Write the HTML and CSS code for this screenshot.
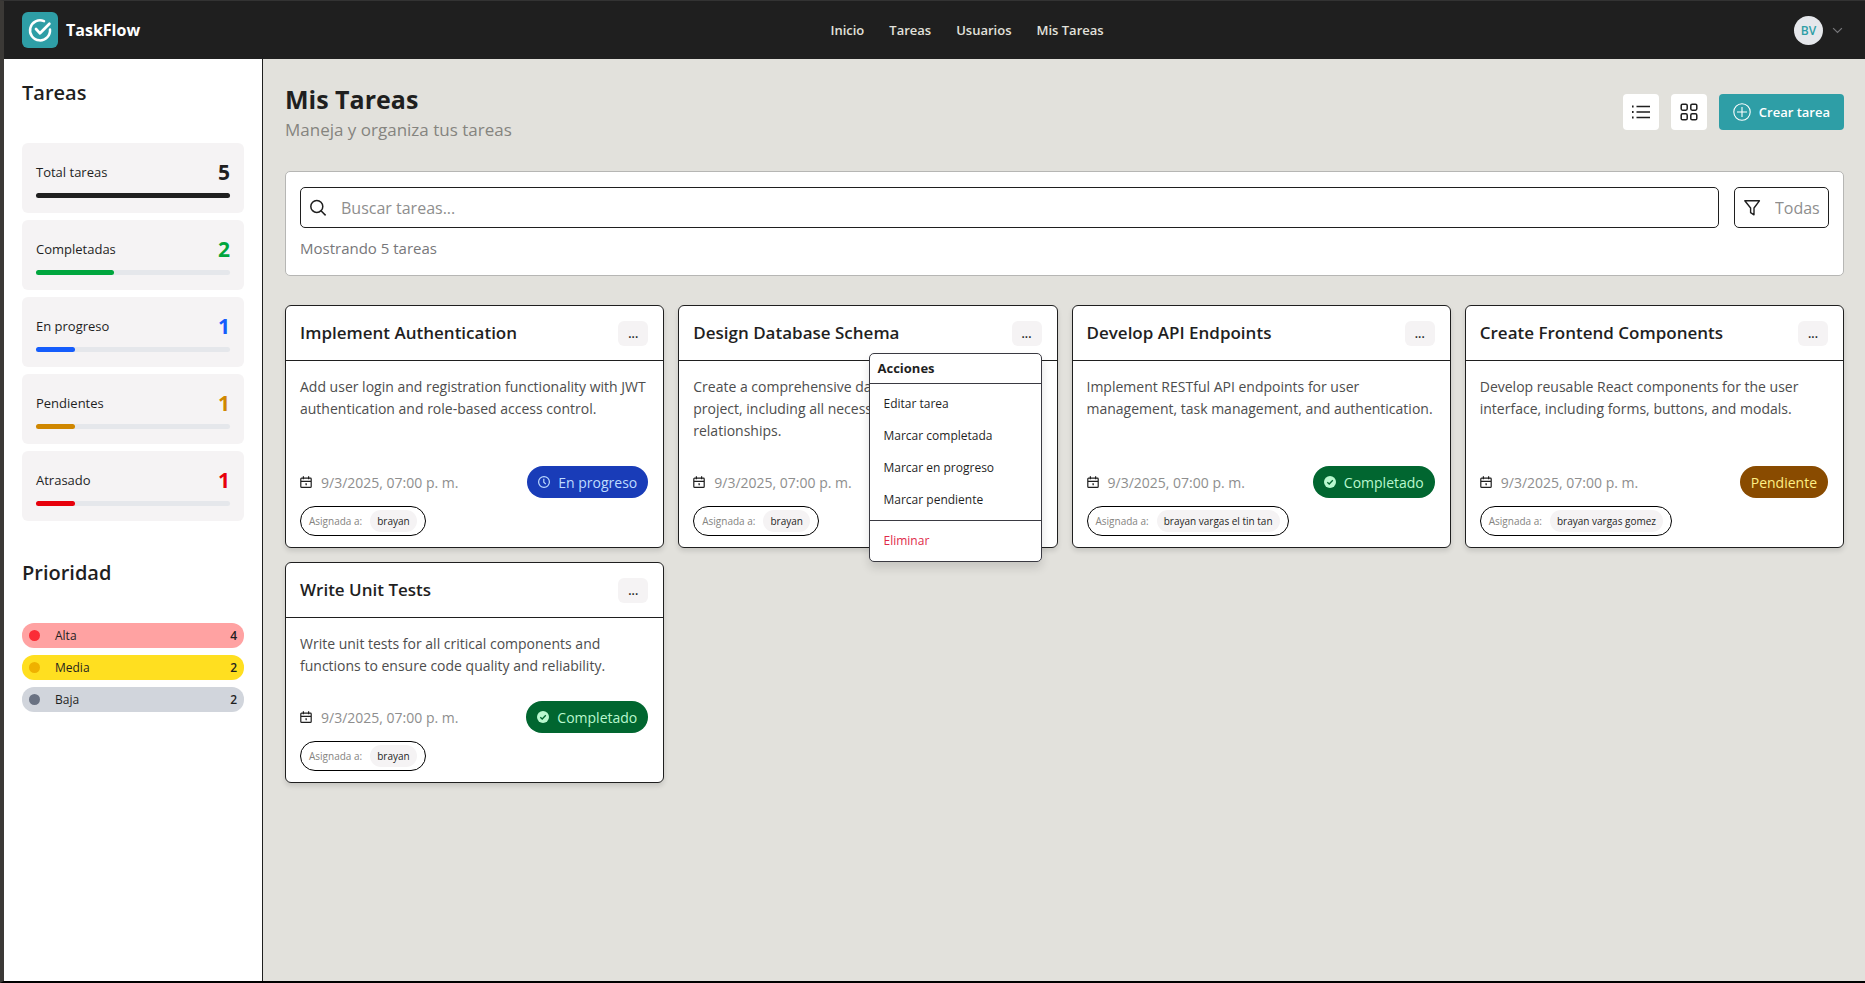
FILE: index.html
```html
<!DOCTYPE html>
<html lang="es">
<head>
<meta charset="utf-8">
<meta name="viewport" content="width=device-width, initial-scale=1">
<title>TaskFlow - Mis Tareas</title>
<link rel="stylesheet" href="styles.css">
</head>
<body>
<svg class="sprite" aria-hidden="true">
  <symbol id="calendar" viewBox="0 0 12 12"><path d="M1.6 2.2h8.8a.8.8 0 0 1 .8.8v7.4a.9.9 0 0 1-.9.9H1.7a.9.9 0 0 1-.9-.9V3a.8.8 0 0 1 .8-.8zM1 5.4h10M3.4.3v3M8.6.3v3M5.4 7.8h.8v1.4" fill="none" stroke="currentColor" stroke-width="1.2"/></symbol>
  <symbol id="clock" viewBox="0 0 12 12"><circle cx="6" cy="6" r="5.4" fill="none" stroke="currentColor" stroke-width="1.2"/><path d="M5.8 2.8v3.4l2 2" fill="none" stroke="currentColor" stroke-width="1.2"/></symbol>
  <symbol id="check" viewBox="0 0 12 12"><circle cx="6" cy="6" r="6" fill="currentColor"/><path d="M3.3 6.2l1.9 1.8 3.6-3.8" fill="none" stroke="#016630" stroke-width="1.3"/></symbol>
</svg>
<header class="topbar">
  <a class="brand" href="#">
    <svg class="brand-logo" viewBox="0 0 36 36" aria-hidden="true"><rect width="36" height="36" rx="6" fill="#2e9ea6"/><path d="M22 9.2A10 10 0 1 0 28 17.5" fill="none" stroke="#fff" stroke-width="2.5" stroke-linecap="round"/><path d="M14 17l4 4.3 9.4-9.6" fill="none" stroke="#fff" stroke-width="2.7" stroke-linecap="round" stroke-linejoin="round"/></svg>
    <span>TaskFlow</span>
  </a>
  <nav class="nav">
    <a href="#">Inicio</a><a href="#">Tareas</a><a href="#">Usuarios</a><a href="#">Mis Tareas</a>
  </nav>
  <button class="user" type="button" aria-label="Cuenta">
    <span class="avatar">BV</span>
    <svg class="chevron" viewBox="0 0 10 6" aria-hidden="true"><path d="M1 .8l4 4 4-4" fill="none" stroke="#77777a" stroke-width="1.1"/></svg>
  </button>
</header>
<div class="shell">
  <aside class="sidebar">
    <h2>Tareas</h2>
    <div class="stats">
      <div class="stat total"><div class="stat-row"><span>Total tareas</span><strong>5</strong></div><div class="bar"><div class="fill" style="width:100%"></div></div></div>
      <div class="stat done"><div class="stat-row"><span>Completadas</span><strong>2</strong></div><div class="bar"><div class="fill" style="width:40%"></div></div></div>
      <div class="stat progress"><div class="stat-row"><span>En progreso</span><strong>1</strong></div><div class="bar"><div class="fill" style="width:20%"></div></div></div>
      <div class="stat pending"><div class="stat-row"><span>Pendientes</span><strong>1</strong></div><div class="bar"><div class="fill" style="width:20%"></div></div></div>
      <div class="stat late"><div class="stat-row"><span>Atrasado</span><strong>1</strong></div><div class="bar"><div class="fill" style="width:20%"></div></div></div>
    </div>
    <h2>Prioridad</h2>
    <ul class="priorities">
      <li class="high"><i class="dot"></i><span>Alta</span><b>4</b></li>
      <li class="medium"><i class="dot"></i><span>Media</span><b>2</b></li>
      <li class="low"><i class="dot"></i><span>Baja</span><b>2</b></li>
    </ul>
  </aside>
  <main class="main">
    <div class="page-head">
      <div>
        <h1>Mis Tareas</h1>
        <p>Maneja y organiza tus tareas</p>
      </div>
      <div class="tools">
        <button class="icon-btn" type="button" aria-label="Vista de lista"><svg width="20" height="16" viewBox="0 0 20 16" aria-hidden="true"><path d="M5.5 2.5H19M5.5 8H19M5.5 13.5H19" stroke="#1f1f1f" stroke-width="1.4"/><path d="M1 2.5h1.6M1 8h1.6M1 13.5h1.6" stroke="#1f1f1f" stroke-width="1.8"/></svg></button>
        <button class="icon-btn" type="button" aria-label="Vista de cuadrícula"><svg width="18" height="18" viewBox="0 0 18 18" fill="none" stroke="#1f1f1f" stroke-width="1.5" aria-hidden="true"><rect x="1.2" y="1.2" width="6" height="6" rx="1.4"/><rect x="10.8" y="1.2" width="6" height="6" rx="1.4"/><rect x="1.2" y="10.8" width="6" height="6" rx="1.4"/><rect x="10.8" y="10.8" width="6" height="6" rx="1.4"/></svg></button>
        <button class="create" type="button"><svg width="18" height="18" viewBox="0 0 18 18" fill="none" stroke="#fff" stroke-width="1.1" aria-hidden="true"><circle cx="9" cy="9" r="8.2"/><path d="M9 4v10M4 9h10"/></svg><span>Crear tarea</span></button>
      </div>
    </div>
    <section class="filters">
      <div class="filter-row">
        <label class="field search"><svg width="18" height="18" viewBox="0 0 18 18" fill="none" stroke="#1f1f1f" stroke-width="1.5" aria-hidden="true"><circle cx="7.8" cy="7.4" r="6"/><path d="M12 11.8l4.6 4.6"/></svg><input type="search" placeholder="Buscar tareas..." aria-label="Buscar tareas"></label>
        <label class="field"><svg width="18" height="18" viewBox="0 0 18 18" fill="none" stroke="#1f1f1f" stroke-width="1.4" stroke-linejoin="round" aria-hidden="true"><path d="M1.8 1.8h14.6L11 9v6.8l-3.4-2.1V9z"/></svg><select aria-label="Filtrar tareas"><option>Todas</option></select></label>
      </div>
      <p>Mostrando 5 tareas</p>
    </section>
    <section class="grid">
      <article class="card">
        <header><h3>Implement Authentication</h3><div class="actions"><button class="more" type="button" aria-label="Acciones">...</button></div></header>
        <div class="body">
          <p class="desc">Add user login and registration functionality with JWT authentication and role-based access control.</p>
          <div class="meta"><span class="date"><svg><use href="#calendar"/></svg><time>9/3/2025, 07:00 p. m.</time></span><span class="badge b-progress"><svg><use href="#clock"/></svg>En progreso</span></div>
          <div class="assigned"><span>Asignada a:</span><span class="person">brayan</span></div>
        </div>
      </article>
      <article class="card">
        <header><h3>Design Database Schema</h3><div class="actions"><button class="more" type="button" aria-label="Acciones" aria-expanded="true">...</button>
          <div class="menu">
            <div class="menu-title">Acciones</div>
            <div class="menu-group"><button type="button">Editar tarea</button><button type="button">Marcar completada</button><button type="button">Marcar en progreso</button><button type="button">Marcar pendiente</button></div>
            <div class="menu-group"><button class="danger" type="button">Eliminar</button></div>
          </div></div></header>
        <div class="body">
          <p class="desc">Create a comprehensive database schema for the project, including all necessary tables and relationships.</p>
          <div class="meta"><span class="date"><svg><use href="#calendar"/></svg><time>9/3/2025, 07:00 p. m.</time></span></div>
          <div class="assigned"><span>Asignada a:</span><span class="person">brayan</span></div>
        </div>
      </article>
      <article class="card">
        <header><h3>Develop API Endpoints</h3><div class="actions"><button class="more" type="button" aria-label="Acciones">...</button></div></header>
        <div class="body">
          <p class="desc">Implement RESTful API endpoints for user management, task management, and authentication.</p>
          <div class="meta"><span class="date"><svg><use href="#calendar"/></svg><time>9/3/2025, 07:00 p. m.</time></span><span class="badge b-done"><svg><use href="#check"/></svg>Completado</span></div>
          <div class="assigned"><span>Asignada a:</span><span class="person">brayan vargas el tin tan</span></div>
        </div>
      </article>
      <article class="card">
        <header><h3>Create Frontend Components</h3><div class="actions"><button class="more" type="button" aria-label="Acciones">...</button></div></header>
        <div class="body">
          <p class="desc">Develop reusable React components for the user interface, including forms, buttons, and modals.</p>
          <div class="meta"><span class="date"><svg><use href="#calendar"/></svg><time>9/3/2025, 07:00 p. m.</time></span><span class="badge b-pending">Pendiente</span></div>
          <div class="assigned"><span>Asignada a:</span><span class="person">brayan vargas gomez</span></div>
        </div>
      </article>
      <article class="card">
        <header><h3>Write Unit Tests</h3><div class="actions"><button class="more" type="button" aria-label="Acciones">...</button></div></header>
        <div class="body">
          <p class="desc">Write unit tests for all critical components and functions to ensure code quality and reliability.</p>
          <div class="meta"><span class="date"><svg><use href="#calendar"/></svg><time>9/3/2025, 07:00 p. m.</time></span><span class="badge b-done"><svg><use href="#check"/></svg>Completado</span></div>
          <div class="assigned"><span>Asignada a:</span><span class="person">brayan</span></div>
        </div>
      </article>
    </section>
  </main>
</div>
</body>
</html>
```
FILE: styles.css
```css
* { box-sizing: border-box; }
body {
  margin: 0;
  min-height: 100vh;
  display: flex;
  flex-direction: column;
  border-left: 4px solid #3b3936;
  border-top: 1px solid #333;
  border-bottom: 2px solid #000;
  background: #e2e1dc;
  color: #1f1f1f;
  font-family: "Open Sans", "Noto Sans", sans-serif;
  font-size: 14px;
}
h1, h2, h3, p, ul { margin: 0; padding: 0; }
a { color: inherit; text-decoration: none; }
button, input, select { font: inherit; color: inherit; border: 0; padding: 0; background: none; }
.sprite { display: none; }

.topbar {
  height: 58px;
  display: flex;
  align-items: center;
  justify-content: space-between;
  padding: 0 22px 0 18px;
  background: #1f1f1f;
}
.brand { display: flex; align-items: center; gap: 8px; color: #fff; font-size: 16px; font-weight: 700; }
.brand-logo { width: 36px; height: 36px; }
.nav { display: flex; gap: 25px; color: #e2e1dc; font-size: 13px; font-weight: 600; }
.user { display: flex; align-items: center; gap: 9px; }
.avatar {
  width: 29px; height: 29px; border-radius: 50%;
  display: grid; place-items: center;
  background: #e5e7eb; color: #2e9ea6; font-size: 12px; font-weight: 600;
}
.chevron { width: 11px; height: 7px; }

.shell { flex: 1; display: flex; }
.sidebar {
  width: 259px;
  flex: none;
  padding: 18px;
  background: #fff;
  border-right: 1px solid #1f1f1f;
}
h2 { font-size: 20px; line-height: 32px; font-weight: 600; }
.stats { display: grid; gap: 7px; margin: 34px 0; }
.stat { padding: 15px 14px; border-radius: 6px; background: #f5f3f4; }
.stat-row { display: flex; justify-content: space-between; align-items: center; height: 27px; margin-bottom: 8px; font-size: 13px; }
.stat-row strong { font-size: 21px; font-weight: 700; }
.bar { height: 5px; border-radius: 3px; background: #e5e7eb; }
.fill { height: 100%; border-radius: 3px; background: currentColor; }
.done strong, .done .bar { color: #00a63e; }
.progress strong, .progress .bar { color: #155dfc; }
.pending strong, .pending .bar { color: #d08700; }
.late strong, .late .bar { color: #e7000b; }
.total .bar { color: #1f1f1f; }
.stats + h2 { padding-top: 2px; }
.priorities { list-style: none; display: grid; gap: 7px; margin-top: 34px; }
.priorities li { height: 25px; display: flex; align-items: center; padding: 0 7px; border-radius: 12px; font-size: 12px; }
.priorities span { flex: 1; margin-left: 15px; }
.priorities b { font-weight: 600; }
.dot { width: 11px; height: 11px; border-radius: 50%; }
.high { background: #ffa2a2; } .high .dot { background: #fb2c36; }
.medium { background: #ffdf20; } .medium .dot { background: #efb100; }
.low { background: #d1d5dc; } .low .dot { background: #6a7282; }

.main { flex: 1; min-width: 0; padding: 22px 21px 22px 22px; }
.page-head { display: flex; justify-content: space-between; align-items: center; margin-bottom: 28px; }
h1 { font-size: 25px; line-height: 36px; font-weight: 700; }
.page-head p { font-size: 17px; line-height: 26px; color: #85847f; }
.tools { display: flex; gap: 12px; }
.icon-btn { width: 36px; height: 36px; display: grid; place-items: center; border-radius: 4px; background: #fff; }
.create { height: 36px; display: flex; align-items: center; gap: 8px; padding: 0 14px; border-radius: 4px; background: #2e9ea6; color: #fff; font-size: 13px; font-weight: 600; }

.filters { padding: 15px 14px; border: 1px solid #b6b6b4; border-radius: 5px; background: #fff; }
.filter-row { display: flex; gap: 15px; }
.field { height: 41px; display: flex; align-items: center; gap: 14px; padding: 0 8px; border: 1px solid #1f1f1f; border-radius: 5px; font-size: 16px; }
.search { flex: 1; }
.field input { flex: 1; min-width: 0; outline: 0; }
.field input::placeholder { color: #8e8e8e; }
.field select { appearance: none; color: #8e8e8e; }
.filters p { margin-top: 8px; font-size: 15px; line-height: 24px; color: #77777a; }

.grid { display: grid; grid-template-columns: repeat(4, minmax(0, 1fr)); gap: 14px; margin-top: 29px; }
.card { display: flex; flex-direction: column; border: 1px solid #1f1f1f; border-radius: 6px; background: #fff; box-shadow: 0 3px 5px rgba(0, 0, 0, .12); }
.card > header { height: 55px; display: flex; align-items: center; justify-content: space-between; padding: 0 15px 0 14px; border-bottom: 1px solid #1f1f1f; }
h3 { font-size: 17px; line-height: 24px; font-weight: 600; }
.actions { position: relative; }
.more { display: block; width: 30px; height: 25px; border-radius: 6px; background: #f5f3f4; font-size: 12px; font-weight: 600; }
.body { flex: 1; display: flex; flex-direction: column; padding: 15px 15px 11px 14px; }
.desc { margin-bottom: 24px; font-size: 14px; line-height: 22px; color: #4d4d4d; }
.meta { height: 32px; margin-top: auto; display: flex; align-items: center; justify-content: space-between; }
.date { display: flex; align-items: center; gap: 9px; color: #8e8e8e; font-size: 14px; }
.date svg { width: 12px; height: 12px; color: #1f1f1f; }
.badge { height: 32px; display: flex; align-items: center; gap: 8px; padding: 0 11px; border-radius: 16px; font-size: 14px; }
.badge svg { width: 12px; height: 12px; }
.b-progress { background: #193cb8; color: #bedbff; }
.b-done { background: #016630; color: #b9f8cf; }
.b-pending { background: #894b00; color: #fff085; }
.assigned { align-self: flex-start; height: 30px; margin-top: 8px; display: flex; align-items: center; gap: 8px; padding: 0 8px; border: 1px solid #000; border-radius: 15px; font-size: 10px; color: #85847f; }
.person { padding: 0 7px; line-height: 22px; border-radius: 11px; background: #f5f3f4; color: #1f1f1f; }

.menu {
  position: absolute; z-index: 2; top: 32px; right: 0; width: 173px;
  border: 1px solid #3a3a42; border-radius: 5px; background: #fff;
  box-shadow: 0 6px 10px rgba(0, 0, 0, .12);
}
.menu-title { padding: 0 8px; line-height: 29px; font-size: 13px; font-weight: 700; }
.menu-group { display: flex; flex-direction: column; padding: 4px; border-top: 1px solid #3a3a42; }
.menu-group button { padding: 0 10px; line-height: 32px; font-size: 12px; text-align: left; }
.menu-group .danger { color: #e0294a; }
```
